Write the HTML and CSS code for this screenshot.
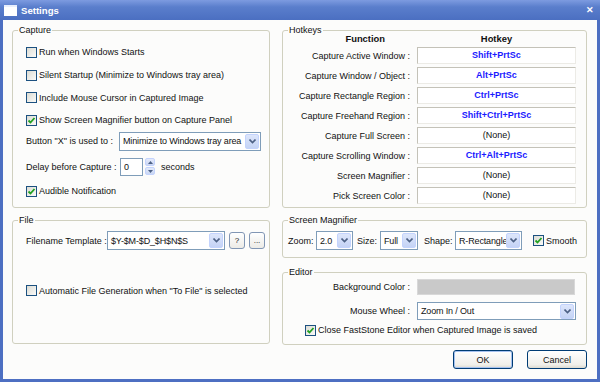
FILE: index.html
```html
<!DOCTYPE html>
<html lang="en">
<head>
  <meta charset="UTF-8" />
  <title>Settings</title>
  <link rel="stylesheet" href="styles.css">
</head>
<body>
  <div class="window">
    <div class="titlebar">
      <span class="app-icon"></span>
      <span class="title">Settings</span>
      <span class="close">&#x2715;</span>
    </div>

    <div class="client">
      <div class="columns">
        <div class="col">
          <div class="group capture">
            <span class="group-title">Capture</span>
            <div class="group-body">
              <div class="row check-row"><span class="check"></span>Run when Windows Starts</div>
              <div class="row check-row"><span class="check"></span>Silent Startup (Minimize to Windows tray area)</div>
              <div class="row check-row"><span class="check"></span>Include Mouse Cursor in Captured Image</div>
              <div class="row check-row"><span class="check on"><svg width="9" height="9" viewBox="0 0 9 9"><path d="M1.5 4.5 L3.5 6.5 L7.5 2" fill="none" stroke="#21a121" stroke-width="1.8"/></svg></span>Show Screen Magnifier button on Capture Panel</div>
              <div class="row field-row">
                <span class="label-x">Button "X" is used to :</span>
                <div class="combo combo-x"><span class="combo-text">Minimize to Windows tray area</span><span class="drop"><svg width="7" height="5" viewBox="0 0 7 5"><path d="M0.5 0.5 L3.5 3.5 L6.5 0.5" fill="none" stroke="#4d6185" stroke-width="1.6"/></svg></span></div>
              </div>
              <div class="row delay-row">
                <span class="label-delay">Delay before Capture :</span>
                <div class="spin-input">0</div>
                <div class="spinner">
                  <span class="spin-btn"><svg width="5" height="3" viewBox="0 0 5 3"><path d="M0 3 L2.5 0 L5 3 Z" fill="#4d6185"/></svg></span>
                  <span class="spin-btn"><svg width="5" height="3" viewBox="0 0 5 3"><path d="M0 0 L2.5 3 L5 0 Z" fill="#4d6185"/></svg></span>
                </div>
                <span class="seconds">seconds</span>
              </div>
              <div class="row check-row audible"><span class="check on"><svg width="9" height="9" viewBox="0 0 9 9"><path d="M1.5 4.5 L3.5 6.5 L7.5 2" fill="none" stroke="#21a121" stroke-width="1.8"/></svg></span>Audible Notification</div>
            </div>
          </div>

          <div class="group file">
            <span class="group-title">File</span>
            <div class="group-body">
              <div class="row filename-row">
                <span class="label-file">Filename Template :</span>
                <div class="combo combo-file"><span class="combo-text">$Y-$M-$D_$H$N$S</span><span class="drop"><svg width="7" height="5" viewBox="0 0 7 5"><path d="M0.5 0.5 L3.5 3.5 L6.5 0.5" fill="none" stroke="#4d6185" stroke-width="1.6"/></svg></span></div>
                <span class="small-btn">?</span>
                <span class="small-btn">...</span>
              </div>
              <div class="row check-row auto-row"><span class="check"></span>Automatic File Generation when "To File" is selected</div>
            </div>
          </div>
        </div>

        <div class="col">
          <div class="group hotkeys">
            <span class="group-title">Hotkeys</span>
            <div class="group-body">
              <div class="hk-head">
                <span class="hk-func">Function</span>
                <span class="hk-key-head">Hotkey</span>
              </div>
              <div class="hk-grid">
                <span class="hk-label">Capture Active Window :</span><span class="hk-box set">Shift+PrtSc</span>
                <span class="hk-label">Capture Window / Object :</span><span class="hk-box set">Alt+PrtSc</span>
                <span class="hk-label">Capture Rectangle Region :</span><span class="hk-box set">Ctrl+PrtSc</span>
                <span class="hk-label">Capture Freehand Region :</span><span class="hk-box set">Shift+Ctrl+PrtSc</span>
                <span class="hk-label">Capture Full Screen :</span><span class="hk-box">(None)</span>
                <span class="hk-label">Capture Scrolling Window :</span><span class="hk-box set">Ctrl+Alt+PrtSc</span>
                <span class="hk-label">Screen Magnifier :</span><span class="hk-box">(None)</span>
                <span class="hk-label">Pick Screen Color :</span><span class="hk-box">(None)</span>
              </div>
            </div>
          </div>

          <div class="group magnifier">
            <span class="group-title">Screen Magnifier</span>
            <div class="group-body">
              <div class="row mag-row">
                <span class="mag-zoom">Zoom:</span>
                <div class="combo combo-zoom"><span class="combo-text">2.0</span><span class="drop"><svg width="7" height="5" viewBox="0 0 7 5"><path d="M0.5 0.5 L3.5 3.5 L6.5 0.5" fill="none" stroke="#4d6185" stroke-width="1.6"/></svg></span></div>
                <span class="mag-size">Size:</span>
                <div class="combo combo-size"><span class="combo-text">Full</span><span class="drop"><svg width="7" height="5" viewBox="0 0 7 5"><path d="M0.5 0.5 L3.5 3.5 L6.5 0.5" fill="none" stroke="#4d6185" stroke-width="1.6"/></svg></span></div>
                <span class="mag-shape">Shape:</span>
                <div class="combo combo-shape"><span class="combo-text">R-Rectangle</span><span class="drop"><svg width="7" height="5" viewBox="0 0 7 5"><path d="M0.5 0.5 L3.5 3.5 L6.5 0.5" fill="none" stroke="#4d6185" stroke-width="1.6"/></svg></span></div>
                <span class="check on smooth"><svg width="9" height="9" viewBox="0 0 9 9"><path d="M1.5 4.5 L3.5 6.5 L7.5 2" fill="none" stroke="#21a121" stroke-width="1.8"/></svg></span>
                <span>Smooth</span>
              </div>
            </div>
          </div>

          <div class="group editor">
            <span class="group-title">Editor</span>
            <div class="group-body">
              <div class="ed-grid">
                <span class="hk-label">Background Color :</span><span class="color-box"></span>
                <span class="hk-label">Mouse Wheel :</span>
                <div class="combo combo-wheel"><span class="combo-text">Zoom In / Out</span><span class="drop"><svg width="7" height="5" viewBox="0 0 7 5"><path d="M0.5 0.5 L3.5 3.5 L6.5 0.5" fill="none" stroke="#4d6185" stroke-width="1.6"/></svg></span></div>
              </div>
              <div class="row check-row close-row"><span class="check on"><svg width="9" height="9" viewBox="0 0 9 9"><path d="M1.5 4.5 L3.5 6.5 L7.5 2" fill="none" stroke="#21a121" stroke-width="1.8"/></svg></span>Close FastStone Editor when Captured Image is saved</div>
            </div>
          </div>
        </div>
      </div>

      <div class="buttons">
        <span class="btn btn-default">OK</span>
        <span class="btn">Cancel</span>
      </div>
    </div>
  </div>
</body>
</html>
```

FILE: styles.css
```css
body {
  margin: 0;
  font-family: "Liberation Sans", Arial, sans-serif;
  font-size: 9px;
  color: #111;
}
.window {
  width: 600px;
  height: 382px;
  box-sizing: border-box;
  border: 3px solid #4d6fc2;
  border-top: none;
  background: #fcfcfb;
  display: flex;
  flex-direction: column;
}
.titlebar {
  height: 20px;
  margin: 0 -3px;
  background: linear-gradient(#7d9be0, #5a7ecc 35%, #4b6fc1);
  display: flex;
  align-items: center;
  padding: 0 6px 0 4px;
  color: #fff;
}
.app-icon {
  width: 13px;
  height: 9px;
  background: #fff;
  border-top: 2px solid #e8eefc;
  margin-right: 4px;
}
.title {
  font-weight: bold;
  font-size: 9.6px;
  flex: 1;
}
.close {
  font-weight: bold;
  font-size: 9px;
}
.client {
  padding: 10px 10px 0 9px;
}
.columns {
  display: grid;
  grid-template-columns: 258px 305px;
  column-gap: 12px;
}
.group {
  border: 1px solid #d0d0bf;
  border-radius: 3px;
  box-sizing: border-box;
}
.group-title {
  display: table;
  margin: -7px 0 0 5px;
  padding: 0 1px;
  line-height: 13px;
  background: #fcfcfb;
}
.row {
  display: flex;
  align-items: center;
  white-space: nowrap;
}
.check {
  width: 11px;
  height: 11px;
  box-sizing: border-box;
  border: 1px solid #1c5180;
  background: linear-gradient(135deg, #dcdcd4, #fafaf8);
  margin-right: 2px;
  display: flex;
  align-items: center;
  justify-content: center;
  flex: none;
}

/* capture */
.capture {
  height: 178px;
}
.capture .group-body {
  padding: 4px 0 0 13px;
}
.capture .check-row {
  height: 22.7px;
}
.field-row {
  height: 19px;
}
.label-x {
  width: 93px;
  flex: none;
}
.combo {
  height: 19px;
  box-sizing: border-box;
  border: 1px solid #7f9db9;
  background: #fff;
  display: flex;
  align-items: center;
  padding: 1px;
  flex: none;
}
.combo-text {
  flex: 1;
  padding-left: 2px;
  white-space: nowrap;
  overflow: hidden;
  letter-spacing: -0.15px;
}
.drop {
  width: 14px;
  height: 15px;
  box-sizing: border-box;
  border: 1px solid #c3d3fd;
  border-radius: 2px;
  background: linear-gradient(#dde6fb, #c4d3f5);
  display: flex;
  align-items: center;
  justify-content: center;
  flex: none;
}
.combo-x {
  width: 142px;
}
.delay-row {
  height: 20px;
  margin-top: 6px;
}
.label-delay {
  width: 94px;
  flex: none;
}
.spin-input {
  width: 23px;
  height: 18px;
  box-sizing: border-box;
  border: 1px solid #7f9db9;
  background: #fff;
  padding-left: 3px;
  line-height: 16px;
}
.spinner {
  margin-left: 2px;
  display: flex;
  flex-direction: column;
  gap: 1px;
}
.spin-btn {
  width: 10px;
  height: 8px;
  box-sizing: border-box;
  border: 1px solid #c3d3fd;
  border-radius: 2px;
  background: linear-gradient(#e4ebfb, #c9d6f4);
  display: flex;
  align-items: center;
  justify-content: center;
}
.seconds {
  margin-left: 6px;
}
.capture .audible {
  margin-top: 3px;
}

/* file */
.file {
  height: 124px;
  margin-top: 12px;
}
.file .group-body {
  padding: 4px 0 0 13px;
}
.filename-row {
  height: 19px;
}
.label-file {
  width: 81px;
  flex: none;
}
.combo-file {
  width: 118px;
}
.small-btn {
  width: 16px;
  height: 17px;
  box-sizing: border-box;
  border: 1px solid #8196b4;
  border-radius: 3px;
  background: linear-gradient(#fff, #ecebe6);
  margin-left: 4px;
  display: flex;
  align-items: center;
  justify-content: center;
  font-size: 8px;
}
.filename-row .small-btn:first-of-type {
  margin-left: 3px;
}
.auto-row {
  height: 22px;
  margin-top: 29.5px;
}

/* hotkeys */
.hotkeys {
  height: 178px;
}
.hotkeys .group-body,
.editor .group-body {
  padding-right: 10px;
}
.hk-head,
.hk-grid,
.ed-grid {
  display: grid;
  grid-template-columns: 1fr 159px;
  column-gap: 7px;
}
.hk-head {
  margin-top: -4px;
  height: 12px;
  line-height: 12px;
  font-weight: bold;
  font-size: 9.4px;
}
.hk-func {
  text-align: right;
  padding-right: 25px;
}
.hk-key-head {
  text-align: center;
}
.hk-grid {
  margin-top: 2px;
  grid-auto-rows: 17px;
  row-gap: 3px;
}
.hk-label {
  text-align: right;
  align-self: center;
  white-space: nowrap;
}
.hk-box {
  box-sizing: border-box;
  border-top: 1px solid #c4c2b8;
  border-left: 1px solid #c4c2b8;
  border-right: 1px solid #ecebe6;
  border-bottom: 1px solid #ecebe6;
  background: #fff;
  text-align: center;
  line-height: 15px;
}
.hk-box.set {
  color: #1a1aff;
  font-weight: bold;
}

/* magnifier */
.magnifier {
  height: 38px;
  margin-top: 12px;
}
.magnifier .group-body {
  padding: 4px 0 0 5px;
}
.mag-row {
  height: 19px;
}
.mag-zoom {
  width: 28px;
  flex: none;
}
.mag-size {
  width: 23px;
  margin-left: 4px;
  flex: none;
}
.mag-shape {
  width: 31px;
  margin-left: 6px;
  flex: none;
}
.combo-zoom {
  width: 37px;
}
.combo-size {
  width: 38px;
}
.combo-shape {
  width: 67px;
}
.smooth {
  margin-left: 11px;
}

/* editor */
.editor {
  height: 73px;
  margin-top: 14px;
}
.ed-grid {
  grid-template-rows: 16px 18px;
  row-gap: 7px;
}
.color-box {
  background: #c9c9c9;
  border: 1px solid #d8d8d8;
  margin-right: 1px;
}
.combo-wheel {
  height: 18px;
}
.close-row {
  height: 20px;
  padding-left: 22px;
}

/* buttons */
.buttons {
  display: flex;
  justify-content: flex-end;
  gap: 14px;
  margin-top: 5px;
}
.btn {
  width: 60px;
  height: 19px;
  box-sizing: border-box;
  border: 1px solid #003c74;
  border-radius: 3px;
  background: linear-gradient(#fff, #f0efea 80%, #dcdad0);
  display: flex;
  align-items: center;
  justify-content: center;
}
.btn-default {
  box-shadow: inset 0 0 0 1px #a6c2f0;
}
```
